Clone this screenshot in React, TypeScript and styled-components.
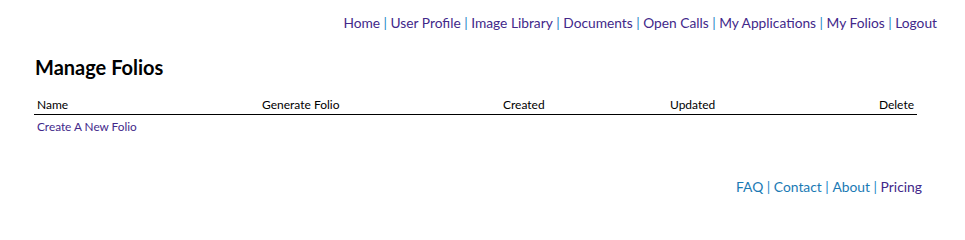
import React from "react";
import styled, { createGlobalStyle } from "styled-components";

const Global = createGlobalStyle`
  html, body { margin: 0; padding: 0; background: #fff; }
  body { font-family: Lato, "Noto Sans", sans-serif; color: #000; }
`;

const Page = styled.div`
  width: 965px;
  height: 215px;
  box-sizing: border-box;
  padding: 13px 28px 0 34px;
  display: flex;
  flex-direction: column;
`;

const TopNav = styled.nav`
  display: flex;
  justify-content: flex-end;
  font-size: 13.75px;
  line-height: 20px;
  color: #1e88c8;
`;

const Link = styled.a<{ $visited?: boolean }>`
  color: ${(p) => (p.$visited ? "#42288a" : "#1a7ab4")};
  text-decoration: none;
  cursor: pointer;
`;

const Sep = styled.span`
  color: #1e88c8;
  white-space: pre;
`;

const Heading = styled.h1`
  margin: 21px 0 0 1px;
  font-size: 20px;
  font-weight: 700;
  line-height: 26px;
`;

const Table = styled.div`
  margin-top: 14px;
  width: 883px;
  font-size: 12px;
`;

const HeadRow = styled.div`
  display: grid;
  grid-template-columns: 225px 241px 167px 1fr 1fr;
  border-bottom: 1px solid #000;
  padding: 3px 3px 2px 3px;
  line-height: 15px;
`;

const Cell = styled.div<{ $align?: string }>`
  text-align: ${(p) => p.$align || "left"};
`;

const BodyRow = styled.div`
  padding: 4px 3px;
  line-height: 15px;
`;

const FolioLink = styled(Link)`
  font-size: 11.8px;
`;

const Footer = styled.nav`
  margin-top: 39px;
  display: flex;
  justify-content: flex-end;
  padding-right: 15px;
  font-size: 13.85px;
  line-height: 20px;
`;

const topItems = [
  "Home",
  "User Profile",
  "Image Library",
  "Documents",
  "Open Calls",
  "My Applications",
  "My Folios",
  "Logout",
];

const footItems: [string, boolean][] = [
  ["FAQ", false],
  ["Contact", false],
  ["About", false],
  ["Pricing", true],
];

export default function App() {
  return (
    <>
      <Global />
      <Page>
        <TopNav>
          {topItems.map((t, i) => (
            <React.Fragment key={t}>
              {i > 0 && <Sep> | </Sep>}
              <Link $visited>{t}</Link>
            </React.Fragment>
          ))}
        </TopNav>
        <Heading>Manage Folios</Heading>
        <Table>
          <HeadRow>
            <Cell>Name</Cell>
            <Cell>Generate Folio</Cell>
            <Cell>Created</Cell>
            <Cell>Updated</Cell>
            <Cell $align="right">Delete</Cell>
          </HeadRow>
          <BodyRow>
            <FolioLink $visited>Create A New Folio</FolioLink>
          </BodyRow>
        </Table>
        <Footer>
          {footItems.map(([t, v], i) => (
            <React.Fragment key={t}>
              {i > 0 && <Sep> | </Sep>}
              <Link $visited={v}>{t}</Link>
            </React.Fragment>
          ))}
        </Footer>
      </Page>
    </>
  );
}
